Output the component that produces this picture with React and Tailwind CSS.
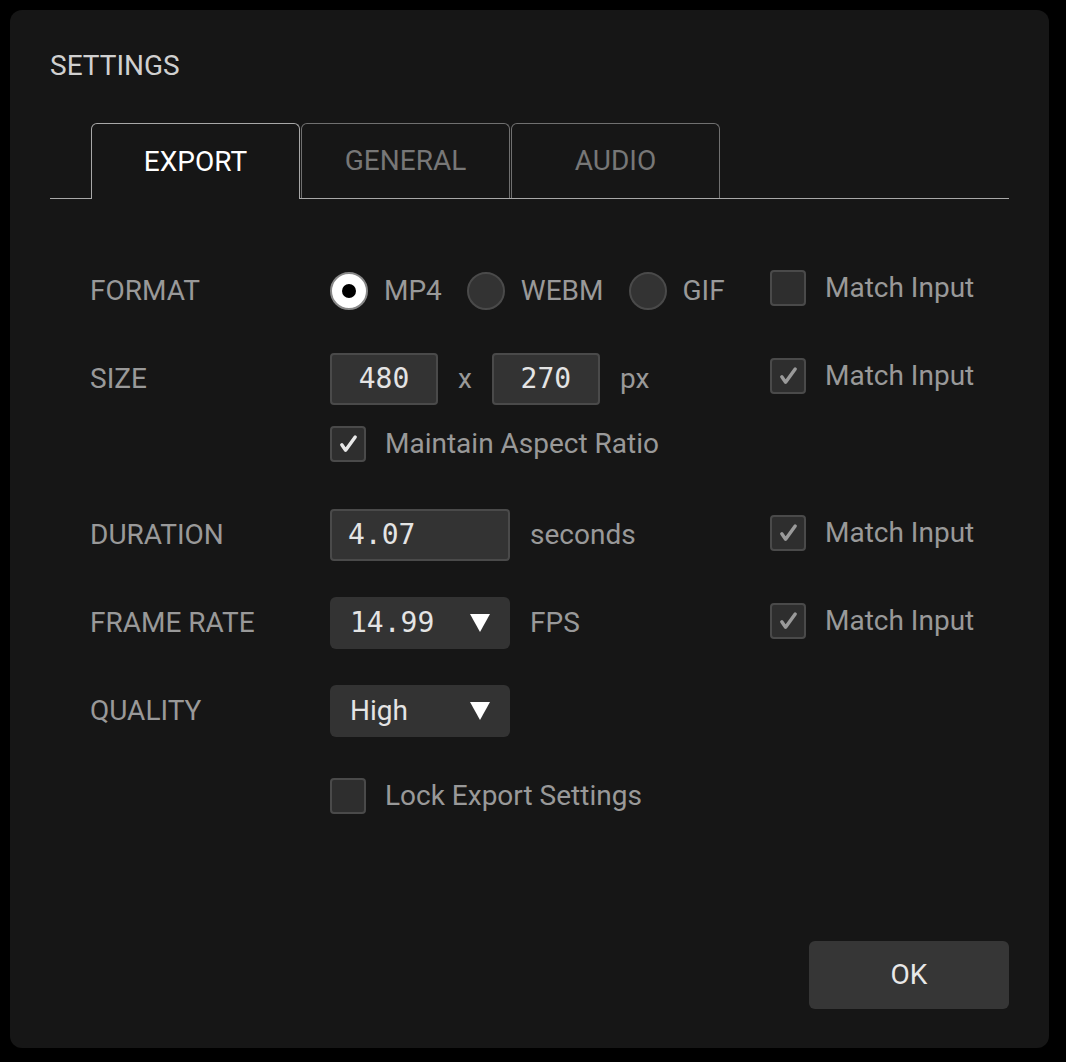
import { useState } from "react";

const sans = "font-['Roboto',sans-serif]";
const mono = "font-['DejaVu_Sans_Mono',monospace]";

function Check({ className }) {
  return (
    <svg viewBox="0 0 32 32" className={className} fill="none" stroke="currentColor" strokeWidth="3.4" strokeLinecap="round" strokeLinejoin="round">
      <path d="M9.8 16.8 L13.6 22.2 L23.2 9" />
    </svg>
  );
}

function Checkbox({ checked, label, bright, onClick }) {
  return (
    <button onClick={onClick} className="flex items-center gap-[19px] text-left">
      <span className="flex h-[36px] w-[36px] items-center justify-center rounded-[4px] border-2 border-[#4a4a4a] bg-[#2e2e2e]">
        {checked && <Check className={`h-[32px] w-[32px] ${bright ? "text-[#e8e8e8]" : "text-[#9a9a9a]"}`} />}
      </span>
      <span className="text-[28px] leading-none text-[#999]">{label}</span>
    </button>
  );
}

function Radio({ selected, label, onClick }) {
  return (
    <button onClick={onClick} className="flex items-center gap-[16px]">
      {selected ? (
        <span className="flex h-[38px] w-[38px] items-center justify-center rounded-full border-2 border-[#888] bg-white">
          <span className="h-[14px] w-[14px] rounded-full bg-black" />
        </span>
      ) : (
        <span className="h-[38px] w-[38px] rounded-full border-2 border-[#4a4a4a] bg-[#333]" />
      )}
      <span className="text-[28px] leading-none text-[#999]">{label}</span>
    </button>
  );
}

function Triangle() {
  return (
    <svg viewBox="0 0 20 18" className="h-[18px] w-[20px]">
      <polygon points="0,0 20,0 10,18" fill="#ffffff" />
    </svg>
  );
}

function Label({ children }) {
  return <div className="text-[28px] leading-none text-[#999]">{children}</div>;
}

export default function App() {
  const [tab, setTab] = useState("EXPORT");
  const [format, setFormat] = useState("MP4");
  const [checks, setChecks] = useState({
    formatMatch: false,
    sizeMatch: true,
    aspect: true,
    durationMatch: true,
    fpsMatch: true,
    lock: false,
  });
  const toggle = (k) => setChecks((c) => ({ ...c, [k]: !c[k] }));

  return (
    <div className={`min-h-screen bg-black p-[10px] ${sans}`}>
      <div className="flex h-[1038px] w-[1039px] flex-col rounded-[12px] bg-[#161616] px-[40px] pb-[39px] pt-[40px]">
        <h1 className="text-[28px] leading-[32px] text-[#d0d0d0]">SETTINGS</h1>

        {/* tabs */}
        <div className="mt-[41px] flex h-[76px] items-end gap-px border-b border-[#a8a8a8] pl-[41px]">
          {["EXPORT", "GENERAL", "AUDIO"].map((t) =>
            t === tab ? (
              <button
                key={t}
                onClick={() => setTab(t)}
                className="-mb-px flex h-[76px] w-[209px] items-center justify-center rounded-t-[6px] border border-b-0 border-[#a8a8a8] bg-[#161616] text-[28px] leading-none text-white"
              >
                {t}
              </button>
            ) : (
              <button
                key={t}
                onClick={() => setTab(t)}
                className="flex h-[75px] w-[209px] items-center justify-center rounded-t-[6px] border border-b-0 border-[#707070] text-[28px] leading-none text-[#777]"
              >
                {t}
              </button>
            )
          )}
        </div>

        <div className="mt-[66px] grid grid-cols-[240px_440px_1fr] pl-[40px]">
          {/* format */}
          <div className="flex h-[52px] items-center"><Label>FORMAT</Label></div>
          <div className="flex h-[52px] items-center gap-[25px]">
            {["MP4", "WEBM", "GIF"].map((f) => (
              <Radio key={f} label={f} selected={format === f} onClick={() => setFormat(f)} />
            ))}
          </div>
          <div className="flex h-[52px] items-center pb-[6px]">
            <Checkbox checked={checks.formatMatch} label="Match Input" onClick={() => toggle("formatMatch")} />
          </div>

          {/* size */}
          <div className="mt-[36px] flex h-[52px] items-center"><Label>SIZE</Label></div>
          <div className="mt-[36px] flex h-[52px] items-center gap-5">
            <div className={`flex h-[52px] w-[108px] items-center justify-center rounded-[4px] border-2 border-[#4a4a4a] bg-[#333] text-[28px] text-[#e4e4e4] ${mono}`}>480</div>
            <span className="text-[28px] leading-none text-[#999]">x</span>
            <div className={`flex h-[52px] w-[108px] items-center justify-center rounded-[4px] border-2 border-[#4a4a4a] bg-[#333] text-[28px] text-[#e4e4e4] ${mono}`}>270</div>
            <span className="text-[28px] leading-none text-[#999]">px</span>
          </div>
          <div className="mt-[36px] flex h-[52px] items-center pb-[6px]">
            <Checkbox checked={checks.sizeMatch} label="Match Input" onClick={() => toggle("sizeMatch")} />
          </div>

          {/* aspect */}
          <div className="mt-[21px] h-[36px]" />
          <div className="mt-[21px] flex h-[36px] items-center">
            <Checkbox checked={checks.aspect} bright label="Maintain Aspect Ratio" onClick={() => toggle("aspect")} />
          </div>
          <div className="mt-[21px] h-[36px]" />

          {/* duration */}
          <div className="mt-[47px] flex h-[52px] items-center"><Label>DURATION</Label></div>
          <div className="mt-[47px] flex h-[52px] items-center gap-5">
            <div className={`flex h-[52px] w-[180px] items-center rounded-[4px] border-2 border-[#4a4a4a] bg-[#333] pl-[16px] text-[28px] text-[#e4e4e4] ${mono}`}>4.07</div>
            <span className="text-[28px] leading-none text-[#999]">seconds</span>
          </div>
          <div className="mt-[47px] flex h-[52px] items-center pb-[4px]">
            <Checkbox checked={checks.durationMatch} label="Match Input" onClick={() => toggle("durationMatch")} />
          </div>

          {/* frame rate */}
          <div className="mt-[36px] flex h-[52px] items-center"><Label>FRAME RATE</Label></div>
          <div className="mt-[36px] flex h-[52px] items-center gap-5">
            <div className={`flex h-[52px] w-[180px] items-center justify-between rounded-[6px] bg-[#333] pl-[20px] pr-[20px] text-[28px] text-[#e4e4e4] ${mono}`}>
              <span>14.99</span>
              <Triangle />
            </div>
            <span className="text-[28px] leading-none text-[#999]">FPS</span>
          </div>
          <div className="mt-[36px] flex h-[52px] items-center pb-[4px]">
            <Checkbox checked={checks.fpsMatch} label="Match Input" onClick={() => toggle("fpsMatch")} />
          </div>

          {/* quality */}
          <div className="mt-[36px] flex h-[52px] items-center"><Label>QUALITY</Label></div>
          <div className="mt-[36px] flex h-[52px] items-center">
            <div className="flex h-[52px] w-[180px] items-center justify-between rounded-[6px] bg-[#333] pl-[20px] pr-[20px] text-[28px] leading-none text-[#e4e4e4]">
              <span>High</span>
              <Triangle />
            </div>
          </div>
          <div className="mt-[36px] h-[52px]" />

          {/* lock */}
          <div className="mt-[41px] h-[36px]" />
          <div className="mt-[41px] flex h-[36px] items-center">
            <Checkbox checked={checks.lock} label="Lock Export Settings" onClick={() => toggle("lock")} />
          </div>
          <div className="mt-[41px] h-[36px]" />
        </div>

        <div className="mt-auto flex justify-end">
          <button className="flex h-[68px] w-[200px] items-center justify-center rounded-[6px] bg-[#363636] text-[28px] leading-none text-[#e8e8e8]">
            OK
          </button>
        </div>
      </div>
    </div>
  );
}
